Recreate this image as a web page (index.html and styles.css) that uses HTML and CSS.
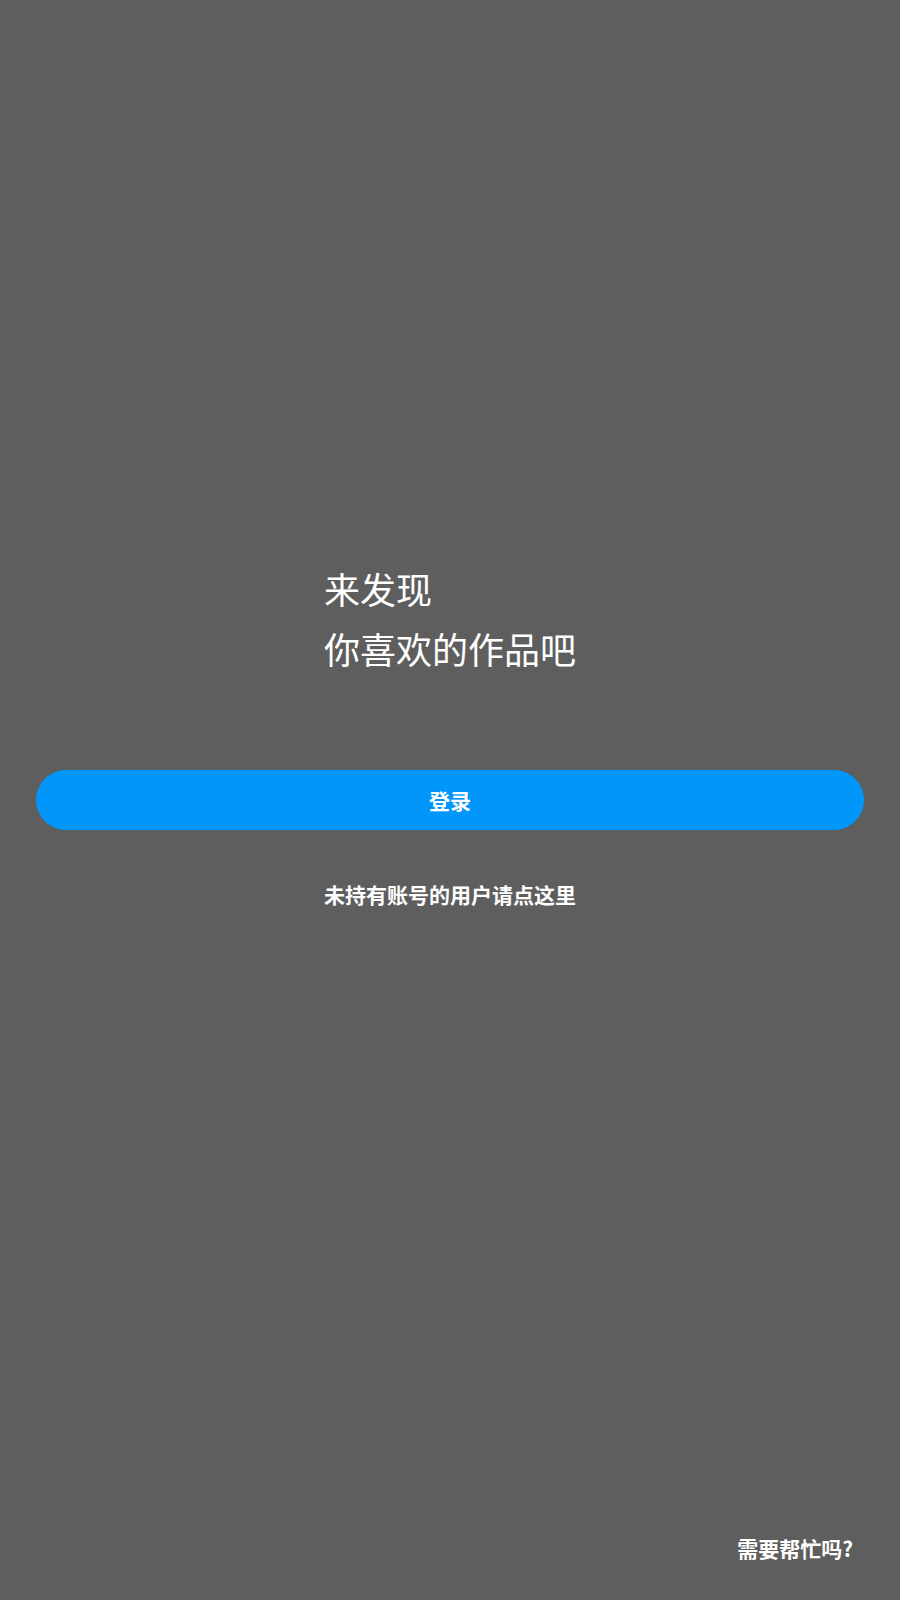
FILE: index.html
```html
<!DOCTYPE html>
<html lang="zh-CN">
<head>
<meta charset="utf-8">
<title>登录</title>
<link rel="stylesheet" href="styles.css">
</head>
<body>
<div class="page">
  <div class="title">
    <div>来发现</div>
    <div>你喜欢的作品吧</div>
  </div>
  <a class="btn-login" href="#">登录</a>
  <a class="signup" href="#">未持有账号的用户请点这里</a>
  <div class="footer">
    <a class="help" href="#">需要帮忙吗?</a>
  </div>
</div>
</body>
</html>
```
FILE: styles.css
```css
html, body {
  margin: 0;
  padding: 0;
  background: #5e5e5e;
}
body {
  font-family: "Noto Sans CJK SC", "Noto Sans", sans-serif;
  color: #ffffff;
}
.page {
  box-sizing: border-box;
  min-height: 1600px;
  padding: 0 36px;
  display: flex;
  flex-direction: column;
}
.title {
  margin: 558px auto 0;
  font-size: 36px;
  line-height: 60px;
  font-weight: 400;
}
.btn-login {
  display: flex;
  align-items: center;
  justify-content: center;
  margin-top: 92px;
  height: 60px;
  border-radius: 30px;
  background: #0096fa;
  color: #fff;
  font-size: 21px;
  font-weight: 700;
  text-decoration: none;
}
.signup {
  align-self: center;
  margin-top: 49px;
  font-size: 21px;
  line-height: 30px;
  font-weight: 700;
  color: #fff;
  text-decoration: none;
}
.footer {
  margin-top: auto;
  display: flex;
  justify-content: flex-end;
  padding: 0 11px 37px 0;
}
.help {
  font-size: 21px;
  line-height: 30px;
  font-weight: 700;
  color: #fff;
  text-decoration: none;
}
```
